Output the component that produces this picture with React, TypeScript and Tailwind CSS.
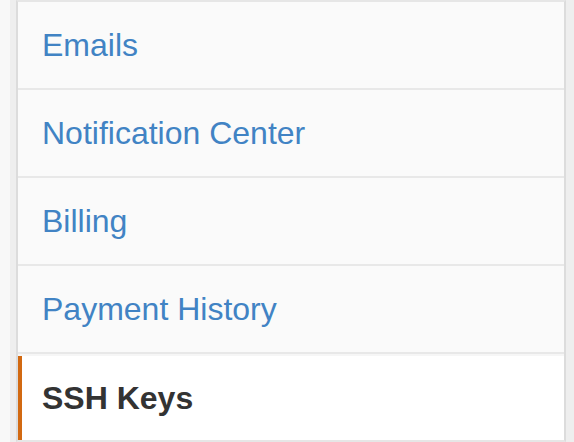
export default function App() {
  const items = ['Emails', 'Notification Center', 'Billing', 'Payment History']

  return (
    <div className="flex h-[442px] w-[574px] bg-[#eeeeee] font-['Liberation_Sans',Arial,sans-serif]">
      <div className="w-[10px] bg-[#f8f8f8]" />
      <div className="w-[6px] bg-[#eeeeee]" />
      <div className="flex w-[550px] flex-col border-x-2 border-y-2 border-[#dcdcdc] border-t-[#e6e6e6] border-b-[#e6e6e6] bg-[#fafafa]">
        {items.map((item) => (
          <div
            key={item}
            className="flex h-[88px] shrink-0 items-center border-b-2 border-[#e8e8e8] pl-[24px] text-[32px] text-[#4183c4]"
          >
            {item}
          </div>
        ))}
        <div className="flex flex-1 flex-col bg-white">
          <div className="h-[2px] bg-[#f6f6f6]" />
          <div className="flex flex-1 items-center border-l-4 border-[#d26911] pl-[20px] text-[32px] font-bold text-[#333333]">
            SSH Keys
          </div>
        </div>
      </div>
      <div className="flex-1 bg-[#eeeeee]" />
    </div>
  )
}
